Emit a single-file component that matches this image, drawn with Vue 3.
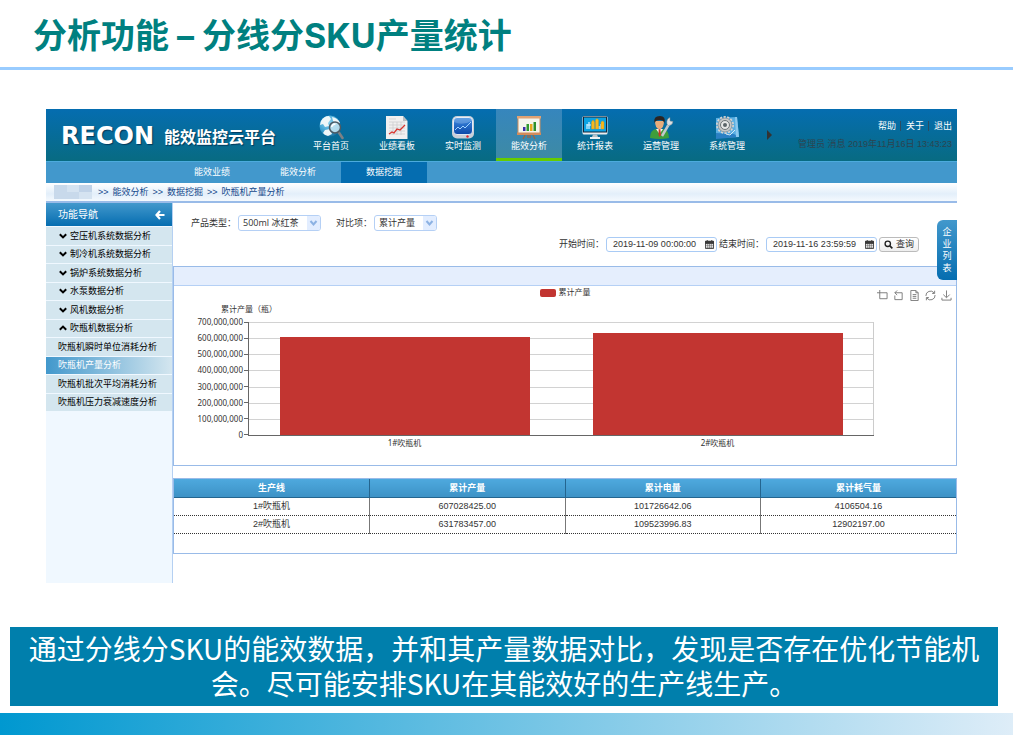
<script setup>
import { ref } from 'vue'

const navItems = [
  { label: '平台首页', icon: 'globe' },
  { label: '业绩看板', icon: 'report' },
  { label: '实时监测', icon: 'monitor' },
  { label: '能效分析', icon: 'easel', active: true },
  { label: '统计报表', icon: 'screen' },
  { label: '运营管理', icon: 'worker' },
  { label: '系统管理', icon: 'gear' }
]
const subItems = [
  { label: '能效业绩' },
  { label: '能效分析' },
  { label: '数据挖掘', active: true }
]
const crumbs = ['能效分析', '数据挖掘', '吹瓶机产量分析']
const groups = [
  { label: '空压机系统数据分析' },
  { label: '制冷机系统数据分析' },
  { label: '锅炉系统数据分析' },
  { label: '水泵数据分析' },
  { label: '风机数据分析' },
  { label: '吹瓶机数据分析', open: true }
]
const leaves = [
  { label: '吹瓶机瞬时单位消耗分析' },
  { label: '吹瓶机产量分析', active: true },
  { label: '吹瓶机批次平均消耗分析' },
  { label: '吹瓶机压力衰减速度分析' }
]
const product = ref('500ml 冰红茶')
const metric = ref('累计产量')
const start = ref('2019-11-09 00:00:00')
const end = ref('2019-11-16 23:59:59')

const max = 700000000
const ticks = [7, 6, 5, 4, 3, 2, 1, 0].map(n => (n * 100000000).toLocaleString('en-US'))
const columns = ['生产线', '累计产量', '累计电量', '累计耗气量']
const rows = [
  ['1#吹瓶机', '607028425.00', '101726642.06', '4106504.16'],
  ['2#吹瓶机', '631783457.00', '109523996.83', '12902197.00']
]
const bars = rows.map(r => ({ name: r[0], pct: (Number(r[1]) / max) * 100 }))
</script>

<template>
  <div class="slide">
    <header class="slide-head">
      <h1>分析功能 – 分线分SKU产量统计</h1>
    </header>

    <div class="app">
      <div class="topbar">
        <div class="brand">
          <span class="logo">RECON</span>
          <span class="brand-name">能效监控云平台</span>
        </div>
        <nav class="nav">
          <a v-for="n in navItems" :key="n.label" href="#" :class="{ active: n.active }">
            <svg v-if="n.icon === 'globe'" viewBox="0 0 26 25">
              <defs>
                <radialGradient id="sea" cx=".4" cy=".3" r=".8">
                  <stop offset="0" stop-color="#8fd6f2" /><stop offset=".6" stop-color="#3a9fd0" /><stop offset="1" stop-color="#12628f" />
                </radialGradient>
              </defs>
              <circle cx="12" cy="11" r="10.5" fill="url(#sea)" />
              <path d="M3 6 Q6 1 11 1 L13 4 L10 8 L11 11 L7 12 L5 9 L2 10Z M14 2 Q20 3 22 8 L19 9 L15 6Z M7 15 L12 14 L14 19 L10 21 Q6 20 5 18Z" fill="#eef6f8" />
              <path d="M20.500 17 L24.500 23" stroke="#7d8084" stroke-width="2.600" stroke-linecap="round" />
              <circle cx="17" cy="12.500" r="5.500" fill="#c8e6f2" fill-opacity=".85" stroke="#4c5a64" stroke-width="1.500" />
              <path d="M13.500 12 Q14.500 9 17.500 9" fill="none" stroke="#fff" stroke-width="1.300" />
            </svg>
            <svg v-else-if="n.icon === 'report'" viewBox="0 0 26 25">
              <path d="M2 1 H19 L23.500 6 V24 H2Z" fill="#f1f0f0" />
              <path d="M19 1 V6 H23.500Z" fill="#b9bcc0" />
              <path d="M5 4 H12 M5 7 H21 M5 10 H21 M5 13 H21 M5 16 H21 M5 19 H21 M9 7 V20 M13 7 V20 M17 7 V20" stroke="#c9cacc" stroke-width=".7" />
              <path d="M5 19 L8 17 L10 18 L13 14 L16 15 L21 10" fill="none" stroke="#d8342e" stroke-width="1.300" />
            </svg>
            <svg v-else-if="n.icon === 'monitor'" viewBox="0 0 26 25">
              <defs>
                <linearGradient id="glass" x1="0" y1="0" x2="0" y2="1">
                  <stop offset="0" stop-color="#3f8de2" /><stop offset="1" stop-color="#0b47a8" />
                </linearGradient>
              </defs>
              <rect x="2" y="1" width="22" height="22.500" rx="5" fill="#c9cfd8" />
              <rect x="3.500" y="2.500" width="19" height="17" rx="3.500" fill="url(#glass)" stroke="#fff" stroke-width=".8" />
              <path d="M5 15 L8 12 L10 14 L13 11 L15 13 L18 10 L21 7" fill="none" stroke="#9fd2ff" stroke-width="1" />
              <path d="M4 7 Q12 11 22 6 V4 Q20 3 19 3 H7 Q4 3 4 6Z" fill="#fff" fill-opacity=".2" />
              <circle cx="17.500" cy="21.500" r="1.200" fill="#e0242c" />
            </svg>
            <svg v-else-if="n.icon === 'easel'" viewBox="0 0 26 25">
              <path d="M10 18 L7 24 M16 18 L19 24 M12 18 V23 M14 18 V23" stroke="#a5623a" stroke-width="1.200" />
              <rect x="2" y="2" width="22" height="17" fill="#f3f5ee" stroke="#cf8f5e" stroke-width="1" />
              <rect x="1" y="1" width="24" height="2.500" fill="#e0a273" />
              <rect x="1" y="17.500" width="24" height="2.500" fill="#d38b5a" />
              <rect x="7" y="12" width="2.500" height="4" fill="#3b2ca8" />
              <rect x="10.500" y="9" width="2.500" height="7" fill="#2f9a32" />
              <rect x="14" y="9" width="2.500" height="7" fill="#e8a51c" />
              <rect x="17.500" y="7" width="2.500" height="9" fill="#2d8f2c" />
            </svg>
            <svg v-else-if="n.icon === 'screen'" viewBox="0 0 26 25">
              <rect x=".5" y="1" width="25" height="18.500" rx="1.500" fill="#e9edf0" />
              <rect x="1.500" y="2" width="23" height="15" fill="#0ca3e3" stroke="#15283a" />
              <path d="M11 19.500 H15 L16 22 H10Z" fill="#b9c3ca" />
              <rect x="8" y="22" width="10" height="2" fill="#eef1f2" />
              <path d="M5 9 V14 M7 7 V14 M5 10 H9 M17 11 V14 M19 9 V14" stroke="#d9f3ff" stroke-width="1.200" />
              <path d="M9.500 7 L11 5 L12.500 7 V14 H9.500Z M13.500 5 L15 3.500 L16.500 5 V14 H13.500Z M19 7 L20.500 6 L22 7 V14 H19Z" fill="#f6b91c" stroke="#d88a12" stroke-width=".4" />
            </svg>
            <svg v-else-if="n.icon === 'worker'" viewBox="0 0 26 25">
              <path d="M2 23 Q2 15 8 14 H15 Q21 15 21 23 Q12 25 2 23Z" fill="#3f9e3b" />
              <path d="M8 14 L11.500 19 L15 14Z" fill="#f3f5f2" />
              <path d="M10.700 14 H12.300 L13 20 L11.500 22 L10.500 20Z" fill="#cc3527" />
              <path d="M7 6 Q7 13.500 11.500 14.500 Q16 13.500 16 6Z" fill="#e7ad7c" />
              <path d="M6.500 8 Q5 1 12 1 Q18 1 16.500 8 Q15 4.500 12 5 Q8 4.500 6.500 8Z" fill="#2b2422" />
              <path d="M14 21 L21 9" stroke="#c2c8cc" stroke-width="2.500" />
              <path d="M19 9 Q18 4 22 2.500 L22 6 L25 6.500 Q24.500 10.500 20.500 10.500Z" fill="#dce1e4" stroke="#7e898f" stroke-width=".5" />
            </svg>
            <svg v-else viewBox="0 0 26 25">
              <path d="M2 3 L23 2 L25 22 L2 23Z" fill="#58aee2" />
              <path d="M2 18 L20 19 L25 22 L2 24Z" fill="#2b80c4" />
              <path d="M21 2 L23 2 L25 22 L22 22Z" fill="#8cc9ee" />
              <circle cx="11" cy="10" r="8" fill="none" stroke="#d3d4d4" stroke-width="2" stroke-dasharray="2.200 1.400" />
              <circle cx="11" cy="10" r="7" fill="#c6c8c8" stroke="#7b8184" stroke-width=".6" />
              <circle cx="11" cy="10" r="4.500" fill="#e6e7e6" stroke="#6d7477" stroke-width="1" />
              <circle cx="11" cy="10" r="2" fill="#5c6468" />
              <path d="M12 19 L16 20 L21 15" fill="none" stroke="#d6ebf7" stroke-width="1" />
            </svg>
            <span>{{ n.label }}</span>
          </a>
        </nav>
        <button class="more" type="button" aria-label="更多"></button>
        <div class="account">
          <div class="links">
            <a href="#">帮助</a><a href="#">关于</a><a href="#">退出</a>
          </div>
          <div class="status">管理员 消息 2019年11月16日 13:43:23</div>
        </div>
      </div>

      <nav class="subnav">
        <a v-for="s in subItems" :key="s.label" href="#" :class="{ active: s.active }">{{ s.label }}</a>
      </nav>

      <div class="crumbs">
        <span class="masked"><i></i><i></i><i></i><i></i><i></i><i></i></span>
        <template v-for="c in crumbs" :key="c"><span>&gt;&gt;</span><a href="#">{{ c }}</a></template>
      </div>

      <div class="body">
        <aside class="side">
          <div class="side-head">
            <span>功能导航</span>
            <button type="button" aria-label="收起">
              <svg viewBox="0 0 10 10"><path d="M5 1 L1.500 5 L5 9 M2 5 H9.500" fill="none" stroke="#fff" stroke-width="2.200" /></svg>
            </button>
          </div>
          <ul>
            <li v-for="g in groups" :key="g.label">
              <a href="#">
                <svg viewBox="0 0 8 8" :class="{ flip: g.open }"><path d="M.8 2.200 L4 5.400 L7.200 2.200" fill="none" stroke="#000" stroke-width="2" /></svg>
                {{ g.label }}
              </a>
            </li>
            <li v-for="l in leaves" :key="l.label" :class="{ active: l.active }"><a href="#">{{ l.label }}</a></li>
          </ul>
        </aside>

        <main class="main">
          <form class="filters" @submit.prevent>
            <div class="line">
              <label for="product">产品类型：</label>
              <span class="select wide">
                <select id="product" v-model="product"><option>500ml 冰红茶</option></select>
                <svg viewBox="0 0 12 14"><path d="M3 5 L6 8.500 L9 5" fill="none" stroke="#8db2e3" stroke-width="2" /></svg>
              </span>
              <label for="metric">对比项：</label>
              <span class="select">
                <select id="metric" v-model="metric"><option>累计产量</option></select>
                <svg viewBox="0 0 12 14"><path d="M3 5 L6 8.500 L9 5" fill="none" stroke="#8db2e3" stroke-width="2" /></svg>
              </span>
            </div>
            <div class="line right">
              <label for="start">开始时间：</label>
              <span class="date">
                <input id="start" v-model="start" type="text">
                <svg viewBox="0 0 10 10"><path d="M.5 1.500 H9.500 V9.500 H.5Z" fill="#fff" stroke="#3a3a3a" /><path d="M.5 1.500 H9.500 V4 H.5Z M2.500 0 V2 M7.500 0 V2" fill="#3a3a3a" stroke="#3a3a3a" /><path d="M3 4 V9.500 M5 4 V9.500 M7 4 V9.500 M.5 6 H9.500 M.5 8 H9.500" stroke="#3a3a3a" stroke-width=".5" /></svg>
              </span>
              <label for="end">结束时间：</label>
              <span class="date">
                <input id="end" v-model="end" type="text">
                <svg viewBox="0 0 10 10"><path d="M.5 1.500 H9.500 V9.500 H.5Z" fill="#fff" stroke="#3a3a3a" /><path d="M.5 1.500 H9.500 V4 H.5Z M2.500 0 V2 M7.500 0 V2" fill="#3a3a3a" stroke="#3a3a3a" /><path d="M3 4 V9.500 M5 4 V9.500 M7 4 V9.500 M.5 6 H9.500 M.5 8 H9.500" stroke="#3a3a3a" stroke-width=".5" /></svg>
              </span>
              <button class="query" type="submit">
                <svg viewBox="0 0 10 10"><circle cx="4.200" cy="4.200" r="3" fill="none" stroke="#222" stroke-width="1.500" /><path d="M6.500 6.500 L9.300 9.300" stroke="#222" stroke-width="1.800" /></svg>
                查询
              </button>
            </div>
          </form>

          <section class="panel">
            <div class="panel-head"></div>
            <div class="chart-head">
              <div class="legend"><i></i>累计产量</div>
              <div class="tools">
                <button type="button" aria-label="区域缩放"><svg viewBox="0 0 12 12"><path d="M3 0 V9.500 H11 V3 H0" /></svg></button>
                <button type="button" aria-label="缩放还原"><svg viewBox="0 0 12 12"><path d="M4.500 .5 L2 3 L4.500 5.500 M2 3 H10 V10.500 H2 V6" /></svg></button>
                <button type="button" aria-label="数据视图"><svg viewBox="0 0 12 12"><path d="M2 .5 H7.500 L10 3 V11.500 H2Z M7.500 .5 V3 H10 M4 5 H8 M4 7 H8 M4 9 H8" /></svg></button>
                <button type="button" aria-label="还原"><svg viewBox="0 0 12 12"><path d="M1 6.500 A5 5 0 0 1 10 3.200 M10.500 .8 V3.800 H7.800 M11 5.500 A5 5 0 0 1 2 8.800 M1.500 11.200 V8.200 H4.200" /></svg></button>
                <button type="button" aria-label="保存为图片"><svg viewBox="0 0 12 12"><path d="M6 .5 V8 M2.500 5 L6 8.500 L9.500 5 M1 8.500 V11 H11 V8.500" /></svg></button>
              </div>
            </div>
            <div class="axis-name">累计产量（瓶）</div>
            <div class="chart">
              <div class="y-axis"><span v-for="t in ticks" :key="t">{{ t }}</span></div>
              <div class="plot">
                <div class="grid"><i v-for="n in 7" :key="n"></i></div>
                <div class="bars">
                  <div v-for="b in bars" :key="b.name"><i :style="{ height: b.pct + '%' }"></i></div>
                </div>
              </div>
              <div class="x-axis"><span v-for="b in bars" :key="b.name">{{ b.name }}</span></div>
            </div>
          </section>

          <section class="panel data">
            <table>
              <thead>
                <tr><th v-for="c in columns" :key="c" scope="col">{{ c }}</th></tr>
              </thead>
              <tbody>
                <tr v-for="r in rows" :key="r[0]"><td v-for="v in r" :key="v">{{ v }}</td></tr>
              </tbody>
            </table>
          </section>

          <button class="drawer" type="button">企业列表</button>
        </main>
      </div>
    </div>

    <p class="caption">通过分线分SKU的能效数据，并和其产量数据对比，发现是否存在优化节能机会。尽可能安排SKU在其能效好的生产线生产。</p>
    <footer class="strip"></footer>
  </div>
</template>

<style>
body {
  margin: 0;
  background: #fff;
}
</style>

<style scoped>
* {
  box-sizing: border-box;
}
.slide {
  display: flex;
  flex-direction: column;
  min-height: 100vh;
  font: 9px/12px "Liberation Sans", "Noto Sans CJK SC", sans-serif;
  color: #333;
}
a {
  color: inherit;
  text-decoration: none;
}
button,
input,
select {
  margin: 0;
  padding: 0;
  border: 0;
  background: none;
  color: inherit;
  font: inherit;
}
svg {
  display: block;
  flex: none;
}
.slide-head {
  padding: 12px 33px 7px;
  border-bottom: 3px solid #9cf;
}
h1 {
  margin: 0;
  color: #008080;
  font: bold 34px/48px Inter, "Noto Sans CJK SC", sans-serif;
}
.app {
  margin: 39px 56px 0 46px;
}

/* top bar */
.topbar {
  display: flex;
  height: 52px;
  background: linear-gradient(#056db0, #086b82);
  color: #fff;
}
.brand {
  display: flex;
  align-items: center;
  width: 252px;
  padding: 2px 0 0 15px;
  text-shadow: 1px 1px 1px #033a5c;
}
.logo {
  width: 103px;
  font: bold 24px/26px "DejaVu Sans", sans-serif;
}
.brand-name {
  font: bold 16px/26px "Noto Sans CJK SC", sans-serif;
  white-space: nowrap;
}
.nav {
  display: flex;
}
.nav a {
  display: flex;
  flex-direction: column;
  align-items: center;
  width: 66px;
  padding-top: 6px;
  border-bottom: 3px solid transparent;
}
.nav a.active {
  background: linear-gradient(#3686bd, #3d8aa5);
  border-bottom-color: #6c0;
}
.nav svg {
  width: 26px;
  height: 25px;
}
.more {
  align-self: center;
  margin-left: 7px;
  border: 5px solid transparent;
  border-left-color: #333;
  border-right: 0;
}
.account {
  flex: 1;
  padding: 11px 5px 0 0;
  text-align: right;
  white-space: nowrap;
}
.links a + a {
  margin-left: 4px;
  padding-left: 5px;
  border-left: 1px solid #2d4c62;
}
.status {
  margin-top: 6px;
  color: #2c4450;
}

.subnav {
  display: flex;
  height: 22px;
  padding-left: 123px;
  border-top: 1px solid #4cabdd;
  background: #4298cc;
  color: #fff;
}
.subnav a {
  width: 86px;
  line-height: 21px;
  text-align: center;
}
.subnav a.active {
  background: #056db0;
}
.crumbs {
  display: flex;
  align-items: center;
  gap: 4px;
  height: 20px;
  padding-left: 8px;
  border-bottom: 2px solid #99bbe8;
  background: linear-gradient(#fff, #e3effa 60%, #f4f9fe);
  color: #15498b;
}
.masked {
  display: grid;
  grid-template-columns: 1fr 1fr 1fr;
  width: 38px;
  height: 14px;
  margin-right: 2px;
}
.masked i {
  background: #c8d9eb;
}
.masked i:nth-child(2),
.masked i:nth-child(6) {
  background: #d5e3f1;
}
.masked i:nth-child(3) {
  background: #c1d3e8;
}

/* side menu */
.body {
  display: flex;
}
.side {
  width: 127px;
  border-right: 1px solid #b5d0f2;
  background: #f0f8ff;
}
.side-head {
  display: flex;
  align-items: center;
  justify-content: space-between;
  height: 23px;
  padding: 0 7px 0 12px;
  background: linear-gradient(#4298cc, #056db0);
  color: #fff;
  font-size: 10px;
}
.side-head svg {
  width: 10px;
  height: 10px;
}
.side ul {
  display: grid;
  grid-auto-rows: 1fr;
  height: 185px;
  margin: 0;
  padding: 0;
  list-style: none;
}
.side li {
  padding-left: 12px;
  border-top: 1px solid #f0f8ff;
  background: #d4e6ef;
  color: #000;
  white-space: nowrap;
}
.side li.active {
  background: linear-gradient(90deg, #4298cc, #d4e6ef);
  color: #fff;
}
.side li a {
  display: flex;
  align-items: center;
  gap: 2px;
  height: 100%;
}
.side li svg {
  width: 10px;
  height: 8px;
}
.side li svg.flip {
  transform: rotate(180deg);
}

/* filters */
.main {
  position: relative;
  flex: 1;
  min-width: 0;
  padding-bottom: 29px;
}
.filters {
  padding: 12px 38px 14px 18px;
}
.line {
  display: flex;
  align-items: center;
  height: 16px;
}
.line.right {
  justify-content: flex-end;
  margin-top: 5px;
}
.line label {
  width: 47px;
  white-space: nowrap;
}
.select + label {
  width: 38px;
}
.select {
  display: flex;
  position: relative;
  width: 63px;
  height: 16px;
  border: 1px solid #b5d0f5;
  border-radius: 3px;
  overflow: hidden;
}
.select.wide {
  width: 83px;
  margin-right: 15px;
}
.select select {
  width: 100%;
  padding-left: 4px;
  appearance: none;
  font-family: "Open Sans", "Noto Sans CJK SC", sans-serif;
}
.select svg {
  position: absolute;
  top: 0;
  right: 0;
  width: 13px;
  height: 14px;
  background: #e2edff;
  pointer-events: none;
}
.date {
  display: flex;
  align-items: center;
  width: 111px;
  height: 15px;
  margin-right: 2px;
  padding: 0 2px 0 6px;
  border: 1px solid #a9cbf5;
  border-radius: 3px;
}
.date input {
  flex: 1;
  min-width: 0;
}
.date svg {
  width: 9px;
  height: 9px;
}
.query {
  display: flex;
  align-items: center;
  justify-content: center;
  gap: 3px;
  width: 40px;
  height: 15px;
  border: 1px solid #bbb;
  border-radius: 3px;
  background: linear-gradient(#fff, #eee);
}
.query svg {
  width: 9px;
  height: 9px;
}

/* chart panel */
.panel {
  border: 1px solid #99bbe8;
}
.panel-head {
  height: 19px;
  border-bottom: 1px solid #b5d0f5;
  background: #e5eefd;
}
.chart-head {
  display: grid;
  grid-template-columns: 1fr auto 1fr;
  height: 17px;
  padding-top: 1px;
  font-size: 8px;
}
.legend {
  display: flex;
  grid-column: 2;
  align-items: center;
  gap: 3px;
  height: 12px;
}
.legend i {
  width: 16px;
  height: 8px;
  border-radius: 2px;
  background: #c23531;
}
.tools {
  display: flex;
  justify-content: flex-end;
  gap: 5px;
  padding: 1px 4px 0 0;
}
.tools svg {
  width: 11px;
  height: 11px;
  fill: none;
  stroke: #777;
  stroke-width: 1;
}
.axis-name {
  padding-left: 47px;
  font: 8px/11px "Noto Sans CJK SC", sans-serif;
}
.chart {
  display: grid;
  grid-template-columns: 74px 1fr;
  padding: 0 82px 22px 0;
  font: 8px/16px "Noto Sans", "Noto Sans CJK SC", sans-serif;
}
.y-axis {
  display: flex;
  flex-direction: column;
  justify-content: space-between;
  height: 129px;
}
.y-axis span {
  display: flex;
  align-items: center;
  justify-content: flex-end;
  gap: 1px;
}
.y-axis span::after {
  width: 4px;
  height: 1px;
  background: #666;
  content: "";
}
.plot {
  display: grid;
  margin: 8px 0 7px;
  border: solid #666;
  border-width: 0 0 1px 1px;
}
.grid,
.bars {
  display: grid;
  grid-area: 1 / 1;
}
.grid {
  grid-auto-rows: 1fr;
  border-right: 1px solid #ccc;
}
.grid i {
  border-top: 1px solid #d2d2d2;
}
.bars,
.x-axis {
  display: grid;
  grid-template-columns: 1fr 1fr;
}
.bars div {
  display: flex;
  align-items: flex-end;
  padding: 0 10%;
}
.bars i {
  width: 100%;
  background: #c23531;
}
.x-axis {
  grid-column: 2;
  height: 6px;
  margin-top: -8px;
  line-height: 16px;
  text-align: center;
}

/* data table */
.data {
  margin-top: 12px;
  padding-bottom: 19px;
}
table {
  width: 100%;
  table-layout: fixed;
  border-collapse: collapse;
}
th,
td {
  height: 18px;
  padding: 0;
  border-right: 1px solid #777;
  border-bottom: 1px dotted #333;
  text-align: center;
}
th {
  border-right-color: #24658f;
  border-bottom: 1px solid #24658f;
  background: linear-gradient(#4ea9de, #3d92c6);
  color: #fff;
}
th:last-child,
td:last-child {
  border-right: 0;
}
.drawer {
  position: absolute;
  top: 17px;
  right: 0;
  width: 20px;
  height: 60px;
  padding: 0 5px;
  border-radius: 6px 0 0 6px;
  background: linear-gradient(#4298cc, #056db0);
  color: #fff;
  word-break: break-all;
}

.caption {
  margin: 44px 15px 7px 10px;
  padding: 4px 16px 5px;
  background: #007fac;
  color: #fff;
  font: 28px/35px "Noto Sans CJK SC", sans-serif;
  text-align: center;
}
.strip {
  height: 22px;
  margin-top: auto;
  background: linear-gradient(90deg, #0098d0, #deedf8);
}
</style>
